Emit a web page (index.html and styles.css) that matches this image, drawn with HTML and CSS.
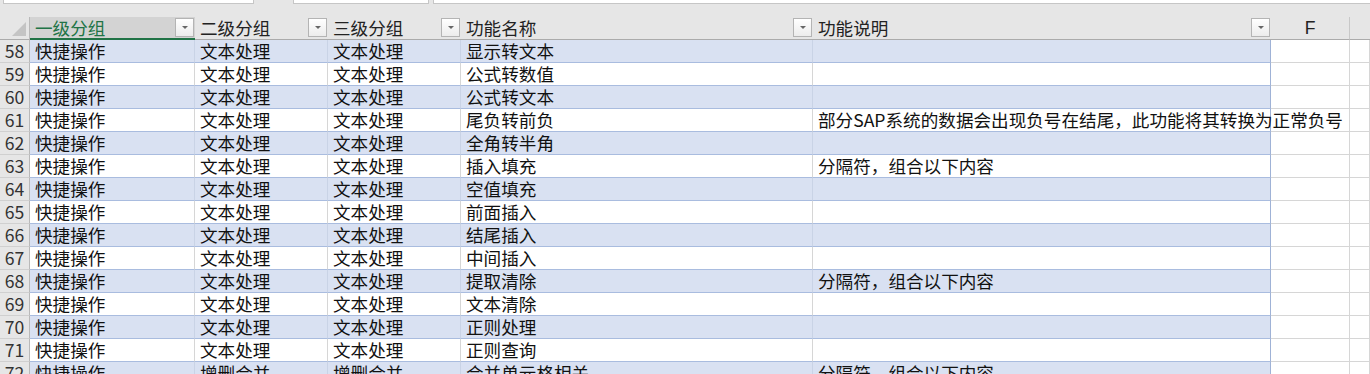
FILE: index.html
```html
<!DOCTYPE html>
<html lang="zh-CN">
<head>
  <meta charset="UTF-8" />
  <title>功能列表</title>
  <link rel="stylesheet" href="styles.css">
</head>
<body>
  <div class="toolbar">
    <div class="box box--name"></div>
    <div class="box box--mid"></div>
    <div class="box box--formula"></div>
  </div>

  <div class="sheet">
    <div class="row row--head">
      <div class="corner"><span class="corner__tri"></span></div>
      <div class="hcell hcell--active">一级分组<span class="filter"></span></div>
      <div class="hcell">二级分组<span class="filter"></span></div>
      <div class="hcell">三级分组<span class="filter"></span></div>
      <div class="hcell">功能名称<span class="filter"></span></div>
      <div class="hcell">功能说明<span class="filter"></span></div>
      <div class="hcell hcell--letter">F</div>
      <div class="hcell hcell--rest"></div>
    </div>

    <div class="row band">
      <div class="num">58</div><div class="cell">快捷操作</div><div class="cell">文本处理</div><div class="cell">文本处理</div><div class="cell">显示转文本</div><div class="cell cell--last"></div><div class="cell grid"></div><div class="cell grid"></div>
    </div>
    <div class="row">
      <div class="num">59</div><div class="cell">快捷操作</div><div class="cell">文本处理</div><div class="cell">文本处理</div><div class="cell">公式转数值</div><div class="cell cell--last"></div><div class="cell grid"></div><div class="cell grid"></div>
    </div>
    <div class="row band">
      <div class="num">60</div><div class="cell">快捷操作</div><div class="cell">文本处理</div><div class="cell">文本处理</div><div class="cell">公式转文本</div><div class="cell cell--last"></div><div class="cell grid"></div><div class="cell grid"></div>
    </div>
    <div class="row">
      <div class="num">61</div><div class="cell">快捷操作</div><div class="cell">文本处理</div><div class="cell">文本处理</div><div class="cell">尾负转前负</div><div class="cell cell--last cell--spill">部分SAP系统的数据会出现负号在结尾，此功能将其转换为正常负号</div><div class="cell grid"></div><div class="cell grid"></div>
    </div>
    <div class="row band">
      <div class="num">62</div><div class="cell">快捷操作</div><div class="cell">文本处理</div><div class="cell">文本处理</div><div class="cell">全角转半角</div><div class="cell cell--last"></div><div class="cell grid"></div><div class="cell grid"></div>
    </div>
    <div class="row">
      <div class="num">63</div><div class="cell">快捷操作</div><div class="cell">文本处理</div><div class="cell">文本处理</div><div class="cell">插入填充</div><div class="cell cell--last">分隔符，组合以下内容</div><div class="cell grid"></div><div class="cell grid"></div>
    </div>
    <div class="row band">
      <div class="num">64</div><div class="cell">快捷操作</div><div class="cell">文本处理</div><div class="cell">文本处理</div><div class="cell">空值填充</div><div class="cell cell--last"></div><div class="cell grid"></div><div class="cell grid"></div>
    </div>
    <div class="row">
      <div class="num">65</div><div class="cell">快捷操作</div><div class="cell">文本处理</div><div class="cell">文本处理</div><div class="cell">前面插入</div><div class="cell cell--last"></div><div class="cell grid"></div><div class="cell grid"></div>
    </div>
    <div class="row band">
      <div class="num">66</div><div class="cell">快捷操作</div><div class="cell">文本处理</div><div class="cell">文本处理</div><div class="cell">结尾插入</div><div class="cell cell--last"></div><div class="cell grid"></div><div class="cell grid"></div>
    </div>
    <div class="row">
      <div class="num">67</div><div class="cell">快捷操作</div><div class="cell">文本处理</div><div class="cell">文本处理</div><div class="cell">中间插入</div><div class="cell cell--last"></div><div class="cell grid"></div><div class="cell grid"></div>
    </div>
    <div class="row band">
      <div class="num">68</div><div class="cell">快捷操作</div><div class="cell">文本处理</div><div class="cell">文本处理</div><div class="cell">提取清除</div><div class="cell cell--last">分隔符，组合以下内容</div><div class="cell grid"></div><div class="cell grid"></div>
    </div>
    <div class="row">
      <div class="num">69</div><div class="cell">快捷操作</div><div class="cell">文本处理</div><div class="cell">文本处理</div><div class="cell">文本清除</div><div class="cell cell--last"></div><div class="cell grid"></div><div class="cell grid"></div>
    </div>
    <div class="row band">
      <div class="num">70</div><div class="cell">快捷操作</div><div class="cell">文本处理</div><div class="cell">文本处理</div><div class="cell">正则处理</div><div class="cell cell--last"></div><div class="cell grid"></div><div class="cell grid"></div>
    </div>
    <div class="row">
      <div class="num">71</div><div class="cell">快捷操作</div><div class="cell">文本处理</div><div class="cell">文本处理</div><div class="cell">正则查询</div><div class="cell cell--last"></div><div class="cell grid"></div><div class="cell grid"></div>
    </div>
    <div class="row band">
      <div class="num">72</div><div class="cell">快捷操作</div><div class="cell">增删合并</div><div class="cell">增删合并</div><div class="cell">合并单元格相关</div><div class="cell cell--last">分隔符，组合以下内容</div><div class="cell grid"></div><div class="cell grid"></div>
    </div>
  </div>
</body>
</html>
```

FILE: styles.css
```css
html, body {
  margin: 0;
  padding: 0;
  height: 374px;
  overflow: hidden;
}
body {
  font-family: "Noto Sans CJK SC", "Liberation Sans", sans-serif;
  font-size: 17.6px;
  color: #111;
  background: #e6e6e6;
}

/* name box / formula bar bottoms */
.toolbar {
  height: 17px;
  display: flex;
  align-items: flex-start;
  padding-left: 3px;
}
.box {
  height: 4px;
  background: #fff;
  border: 1px solid #c6c6c6;
  border-top: 0;
  box-sizing: border-box;
}
.box--name { width: 251px; margin-right: 39px; }
.box--mid { width: 136px; margin-right: 4px; }
.box--formula { flex: 1; border-right: 0; }

.row {
  display: grid;
  grid-template-columns: 30px 165px 133px 133px 352px 458px 79px 1fr;
  height: 23px;
  background: #fff;
}
.row.band { background: #d9e1f2; }

.cell, .num, .hcell, .corner {
  box-sizing: border-box;
  height: 23px;
  line-height: 22px;
  white-space: nowrap;
}

.cell {
  padding-left: 5px;
  border-right: 1px solid #d6d6d6;
  border-bottom: 1px solid #a9bcdf;
}
.band .cell { border-right-color: #c9d3e6; }
.cell--last { border-right-color: #9fb2d6 !important; }
.cell--spill { position: relative; z-index: 1; }
.grid {
  background: #fff;
  border-bottom-color: #d6d6d6;
  border-right-color: #d6d6d6 !important;
}

.num {
  background: #e6e6e6;
  color: #333;
  text-align: center;
  border-right: 1px solid #b9b9b9;
  border-bottom: 1px solid #d0d0d0;
}

/* header row */
.row--head { background: #e6e6e6; }
.hcell {
  position: relative;
  padding-left: 5px;
  color: #222;
  border-bottom: 1px solid #ababab;
}
.hcell--active {
  background: #d3d3d3;
  color: #217346;
  border-bottom: 2px solid #217346;
}
.hcell--letter {
  padding-left: 0;
  text-align: center;
  font-family: "Liberation Sans", sans-serif;
  border-right: 1px solid #c8c8c8;
}

.filter {
  position: absolute;
  right: 1px;
  top: 1px;
  width: 19px;
  height: 19px;
  box-sizing: border-box;
  border: 1px solid #b4b4b4;
  background: linear-gradient(#ffffff, #ececec);
}
.filter::after {
  content: "";
  position: absolute;
  left: 6px;
  top: 7px;
  border-left: 3px solid transparent;
  border-right: 3px solid transparent;
  border-top: 3px solid #666;
}

.corner {
  position: relative;
  border-right: 1px solid #b9b9b9;
  border-bottom: 1px solid #ababab;
}
.corner__tri {
  position: absolute;
  right: 3px;
  bottom: 3px;
  width: 0;
  height: 0;
  border-left: 14px solid transparent;
  border-bottom: 14px solid #c4c4c4;
}
```
